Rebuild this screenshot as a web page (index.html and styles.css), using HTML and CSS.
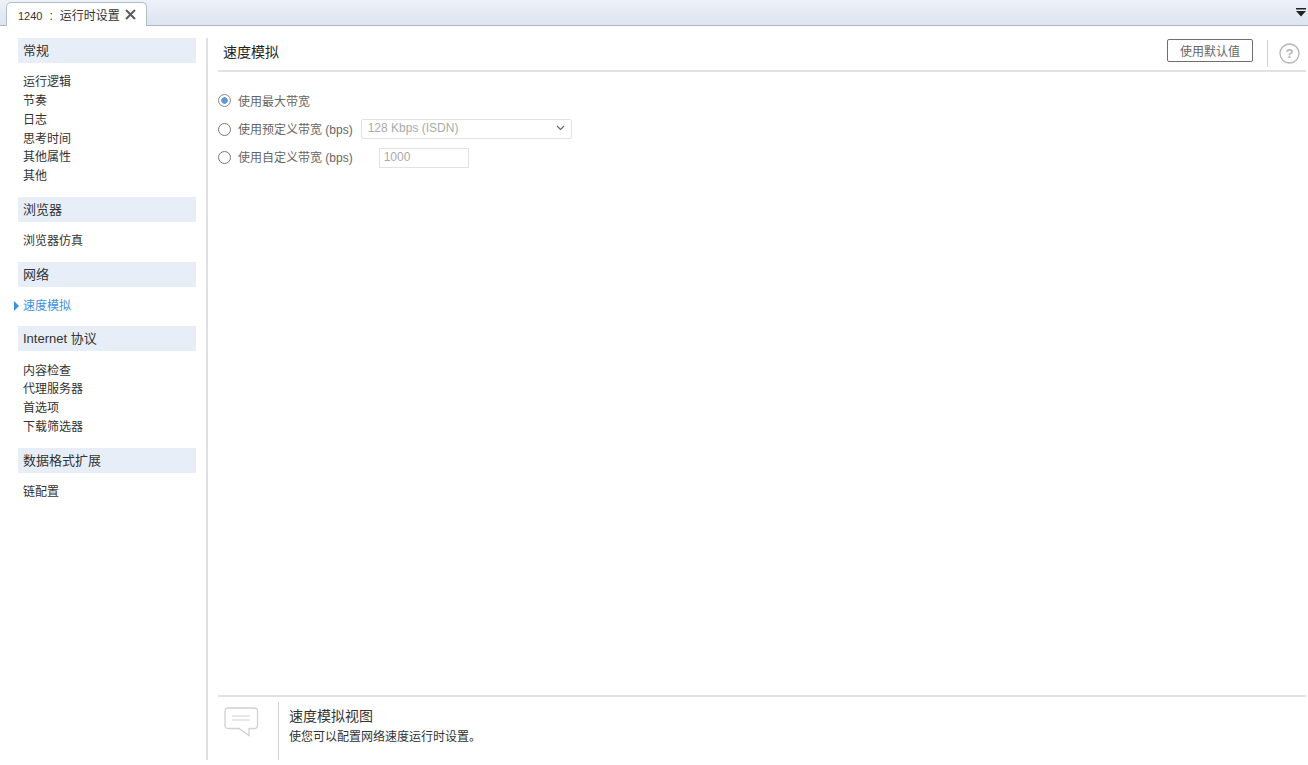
FILE: index.html
```html
<!DOCTYPE html>
<html lang="zh-CN">
<head>
    <meta charset="UTF-8">
    <meta name="viewport" content="width=device-width, initial-scale=1.0">
    <title>运行时设置</title>
    <link rel="stylesheet" href="styles.css">
</head>
<body>
    <div class="tab-bar">
        <div class="tab">
            <span class="tab-title"><span class="tab-id">1240</span><span class="tab-colon">:</span>运行时设置</span>
            <svg class="tab-close" width="11" height="11" viewBox="0 0 11 11"><path d="M1 1 L10 10 M10 1 L1 10" stroke="#5c5c5c" stroke-width="2" fill="none"/></svg>
        </div>
        <svg class="tab-menu" width="10" height="9" viewBox="0 0 10 9"><path d="M0 0 H10 V1.5 H0 Z M0 3 H10 L5 8.5 Z" fill="#222"/></svg>
    </div>

    <div class="layout">
        <!-- Left navigation -->
        <nav class="sidebar">
            <div class="nav-head">常规</div>
            <ul class="nav-list">
                <li>运行逻辑</li>
                <li>节奏</li>
                <li>日志</li>
                <li>思考时间</li>
                <li>其他属性</li>
                <li>其他</li>
            </ul>
            <div class="nav-head">浏览器</div>
            <ul class="nav-list">
                <li>浏览器仿真</li>
            </ul>
            <div class="nav-head">网络</div>
            <ul class="nav-list">
                <li class="active">速度模拟</li>
            </ul>
            <div class="nav-head">Internet 协议</div>
            <ul class="nav-list">
                <li>内容检查</li>
                <li>代理服务器</li>
                <li>首选项</li>
                <li>下载筛选器</li>
            </ul>
            <div class="nav-head">数据格式扩展</div>
            <ul class="nav-list">
                <li>链配置</li>
            </ul>
        </nav>

        <main class="content">
            <div class="content-head">
                <h1>速度模拟</h1>
                <button class="default-btn">使用默认值</button>
                <div class="head-sep"></div>
                <svg class="help" width="21" height="21" viewBox="0 0 21 21">
                    <circle cx="10.5" cy="10.5" r="9.5" fill="none" stroke="#b4b4b4" stroke-width="1.3"/>
                    <text x="10.5" y="15" text-anchor="middle" class="help-mark">?</text>
                </svg>
            </div>

            <div class="options">
                <div class="option">
                    <span class="radio checked"></span>
                    <label>使用最大带宽</label>
                </div>
                <div class="option">
                    <span class="radio"></span>
                    <label>使用预定义带宽 (bps)</label>
                    <div class="select">
                        <span>128 Kbps (ISDN)</span>
                        <svg width="9" height="6" viewBox="0 0 9 6"><path d="M1 1 L4.5 4.5 L8 1" stroke="#666" stroke-width="1.2" fill="none"/></svg>
                    </div>
                </div>
                <div class="option">
                    <span class="radio"></span>
                    <label>使用自定义带宽 (bps)</label>
                    <input class="num-input" type="text" value="1000" disabled>
                </div>
            </div>

            <div class="footer">
                <svg class="footer-icon" width="35" height="30" viewBox="0 0 35 30">
                    <path d="M4 1 H30 Q33.5 1 33.5 4 V18 Q33.5 21.5 30 21.5 H25 V28.5 L15 21.5 H4 Q1 21.5 1 18 V4 Q1 1 4 1 Z" fill="none" stroke="#d2d2d2" stroke-width="1.3"/>
                    <path d="M8 9 H26 M8 13 H26" stroke="#d2d2d2" stroke-width="1.2" fill="none"/>
                </svg>
                <div class="footer-text">
                    <h2>速度模拟视图</h2>
                    <p>使您可以配置网络速度运行时设置。</p>
                </div>
            </div>
        </main>
    </div>
</body>
</html>
```

FILE: styles.css
```css
html, body {
    margin: 0;
    padding: 0;
    height: 100%;
}

body {
    font-family: "Liberation Sans", "Noto Sans CJK SC", sans-serif;
    font-size: 12px;
    color: #333;
    background: #fff;
    overflow: hidden;
}

.tab-bar {
    display: flex;
    align-items: flex-end;
    justify-content: space-between;
    height: 25px;
    padding-left: 6px;
    background: linear-gradient(#eef2f8, #dce4f0);
    border-bottom: 1px solid #aeb6c2;
}

.tab {
    display: flex;
    align-items: center;
    gap: 5px;
    box-sizing: border-box;
    width: 141px;
    height: 24px;
    margin-bottom: -1px;
    padding-left: 11px;
    background: #fff;
    border: 1px solid #b4bcc8;
    border-bottom: none;
    border-radius: 5px 5px 0 0;
}

.tab-title {
    color: #333;
    white-space: nowrap;
}

.tab-id {
    font-size: 11px;
}

.tab-colon {
    margin: 0 7px;
}

.tab-menu {
    margin: 0 2px 8px 0;
}

.layout {
    display: flex;
    box-sizing: border-box;
    height: 734px;
    padding-top: 12px;
}

.sidebar {
    box-sizing: border-box;
    width: 206px;
    padding: 0 10px 0 18px;
}

.nav-head {
    height: 25px;
    padding-left: 5px;
    font-size: 13px;
    line-height: 26px;
    color: #333;
    background: #e8eef7;
}

.nav-list {
    list-style: none;
    margin: 0 0 10.85px;
    padding: 10.3px 0 0 5px;
}

.nav-list li {
    position: relative;
    line-height: 18.75px;
    color: #333;
}

.nav-list li.active {
    color: #3d8fe0;
}

.nav-list li.active::before {
    content: "";
    position: absolute;
    left: -9px;
    top: 4px;
    border-left: 5px solid #3d8fe0;
    border-top: 5px solid transparent;
    border-bottom: 5px solid transparent;
}

.content {
    flex: 1;
    display: flex;
    flex-direction: column;
    box-sizing: border-box;
    margin-right: 2px;
    padding-left: 10px;
    border-left: 2px solid #e0e0e0;
}

.content-head {
    display: flex;
    align-items: center;
    box-sizing: border-box;
    height: 34px;
    padding: 0 6px 8px 5px;
    border-bottom: 2px solid #e2e2e2;
}

.content-head h1 {
    flex: 1;
    margin: 2px 0 0;
    font-size: 14px;
    font-weight: normal;
    color: #222;
}

.default-btn {
    box-sizing: border-box;
    width: 86px;
    height: 23px;
    padding: 0;
    font: inherit;
    color: #666;
    background: #fff;
    border: 1px solid #6e6e6e;
    border-radius: 2px;
}

.head-sep {
    width: 1px;
    height: 27px;
    margin: 6px 11px 0 14px;
    background: #d0d0d0;
}

.help {
    margin-top: 6px;
}

.help-mark {
    font-size: 13px;
    font-weight: bold;
    fill: #b4b4b4;
}

.options {
    flex: 1;
    padding-top: 19px;
}

.option {
    display: flex;
    align-items: center;
    height: 19px;
    margin-bottom: 9.5px;
    color: #666;
}

.option + .option label {
    margin-bottom: 2px;
}

.radio {
    box-sizing: border-box;
    width: 13px;
    height: 13px;
    margin-right: 7px;
    background: #fff;
    border: 1px solid #777;
    border-radius: 50%;
}

.radio.checked {
    border-color: #888;
    background: radial-gradient(circle, #5b9bdc 0 3px, #fff 3.5px);
}

.select {
    display: flex;
    align-items: center;
    justify-content: space-between;
    box-sizing: border-box;
    width: 211px;
    height: 20px;
    margin-left: 8px;
    padding: 0 6px 2px 6px;
    color: #aaa;
    border: 1px solid #e2e2e2;
    border-radius: 2px;
}

.num-input {
    box-sizing: border-box;
    width: 90px;
    height: 20px;
    margin-left: 26px;
    padding: 0 4px 2px;
    font: inherit;
    color: #aaa;
    background: #fff;
    border: 1px solid #e2e2e2;
}

.footer {
    display: flex;
    box-sizing: border-box;
    height: 65px;
    padding-top: 5px;
    border-top: 2px solid #e2e2e2;
}

.footer-icon {
    margin: 5px 19px 0 6px;
}

.footer-text {
    flex: 1;
    padding: 5px 0 0 10px;
    border-left: 1px solid #d0d0d0;
}

.footer-text h2 {
    margin: 0;
    font-size: 14px;
    font-weight: normal;
    line-height: 19px;
    color: #333;
}

.footer-text p {
    margin: 2px 0 0;
    line-height: 19px;
    color: #333;
}
```
